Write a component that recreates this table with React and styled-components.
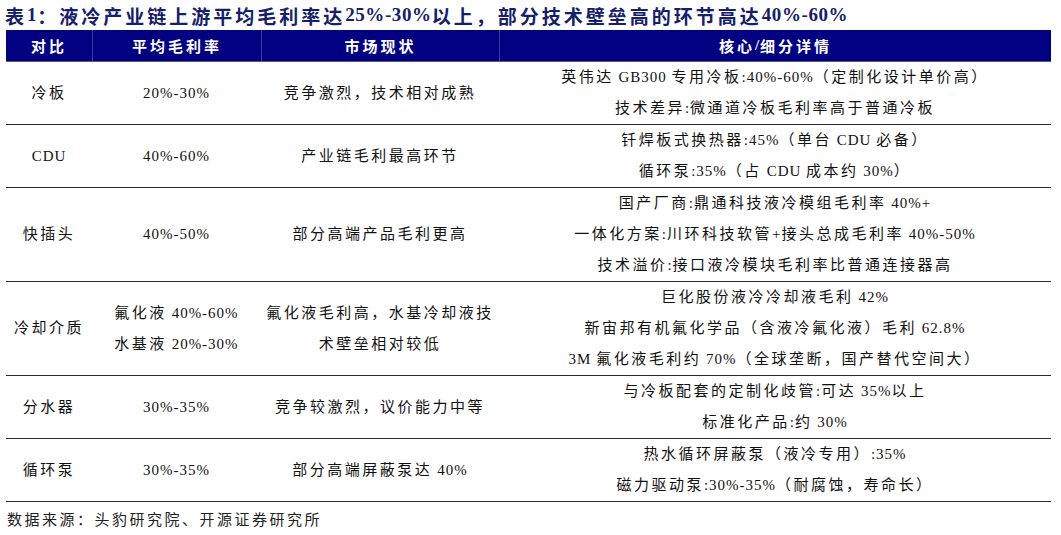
import React from "react";
import styled, { createGlobalStyle } from "styled-components";

const GlobalStyle = createGlobalStyle`
  body {
    margin: 0;
    background: #ffffff;
    font-family: "Liberation Serif", "Noto Sans CJK SC", serif;
  }
`;

const rows = [
  {
    name: ["冷板"],
    rate: ["20%-30%"],
    status: "竞争激烈，技术相对成熟",
    detail: ["英伟达 GB300 专用冷板:40%-60%（定制化设计单价高）", "技术差异:微通道冷板毛利率高于普通冷板"],
  },
  {
    name: ["CDU"],
    rate: ["40%-60%"],
    status: "产业链毛利最高环节",
    detail: ["钎焊板式换热器:45%（单台 CDU 必备）", "循环泵:35%（占 CDU 成本约 30%）"],
  },
  {
    name: ["快插头"],
    rate: ["40%-50%"],
    status: "部分高端产品毛利更高",
    detail: [
      "国产厂商:鼎通科技液冷模组毛利率 40%+",
      "一体化方案:川环科技软管+接头总成毛利率 40%-50%",
      "技术溢价:接口液冷模块毛利率比普通连接器高",
    ],
  },
  {
    name: ["冷却介质"],
    rate: ["氟化液 40%-60%", "水基液 20%-30%"],
    status: "氟化液毛利高，水基冷却液技术壁垒相对较低",
    detail: [
      "巨化股份液冷冷却液毛利 42%",
      "新宙邦有机氟化学品（含液冷氟化液）毛利 62.8%",
      "3M 氟化液毛利约 70%（全球垄断，国产替代空间大）",
    ],
  },
  {
    name: ["分水器"],
    rate: ["30%-35%"],
    status: "竞争较激烈，议价能力中等",
    detail: ["与冷板配套的定制化歧管:可达 35%以上", "标准化产品:约 30%"],
  },
  {
    name: ["循环泵"],
    rate: ["30%-35%"],
    status: "部分高端屏蔽泵达 40%",
    detail: ["热水循环屏蔽泵（液冷专用）:35%", "磁力驱动泵:30%-35%（耐腐蚀，寿命长）"],
  },
];

const Page = styled.div`
  width: 1061px;
  height: 535px;
  padding: 0 10px 0 6px;
  box-sizing: border-box;
  display: flex;
  flex-direction: column;
`;

const Title = styled.div`
  height: 30px;
  display: flex;
  align-items: center;
  font-size: 19px;
  font-weight: bold;
  color: #16206a;
  letter-spacing: 3px;
  white-space: nowrap;
  margin-left: -1px;
`;

const Latin = styled.span`
  letter-spacing: ${(p) => (p.$title ? "0.6px" : "1px")};
`;

const Table = styled.div`
  width: 1045px;
  display: flex;
  flex-direction: column;
`;

const Grid = styled.div`
  display: grid;
  grid-template-columns: 86px 169px 238px 552px;
`;

const HeadRow = styled(Grid)`
  height: 32px;
  background: #000080;
  border-bottom: 1px solid #5a5a7a;
  box-sizing: border-box;
`;

const HeadCell = styled.div`
  display: flex;
  align-items: center;
  justify-content: center;
  color: #ffffff;
  font-size: 15px;
  font-weight: bold;
  letter-spacing: 3px;
  border-left: ${(p) => (p.$first ? "none" : "1px solid #3c3c9c")};
`;

const BodyRow = styled(Grid)`
  border-bottom: 1.5px solid #2b2b2b;
`;

const Cell = styled.div`
  display: flex;
  flex-direction: column;
  align-items: center;
  justify-content: center;
  text-align: center;
  padding: 0 4px;
  font-size: 15px;
  line-height: 31px;
  letter-spacing: 2.5px;
  color: #111111;
`;

const Source = styled.div`
  flex: 1;
  display: flex;
  align-items: center;
  font-size: 15px;
  letter-spacing: 2.5px;
  color: #222222;
  padding-left: 1px;
`;

// ASCII runs get tighter spacing than the CJK glyphs
const Mixed = ({ text, title }) =>
  text.split(/([\x20-\x7E]*[\x21-\x7E][\x20-\x7E]*)/).map((part, i) =>
    /[\x21-\x7E]/.test(part) ? (
      <Latin key={i} $title={title}>
        {part}
      </Latin>
    ) : (
      part
    )
  );

const Lines = ({ lines }) =>
  lines.map((line, i) => (
    <div key={i}>
      <Mixed text={line} />
    </div>
  ));

const App = () => {
  return (
    <>
      <GlobalStyle />
      <Page>
        <Title>
          <Mixed text="表1：液冷产业链上游平均毛利率达 25%-30%以上，部分技术壁垒高的环节高达 40%-60%" title />
        </Title>
        <Table>
          <HeadRow>
            <HeadCell $first>对比</HeadCell>
            <HeadCell>平均毛利率</HeadCell>
            <HeadCell>市场现状</HeadCell>
            <HeadCell>
              核心<Latin>/</Latin>细分详情
            </HeadCell>
          </HeadRow>
          {rows.map((row, i) => (
            <BodyRow key={i}>
              <Cell>
                <Lines lines={row.name} />
              </Cell>
              <Cell>
                <Lines lines={row.rate} />
              </Cell>
              <Cell>
                <div>
                  <Mixed text={row.status} />
                </div>
              </Cell>
              <Cell>
                <Lines lines={row.detail} />
              </Cell>
            </BodyRow>
          ))}
        </Table>
        <Source>数据来源：头豹研究院、开源证券研究所</Source>
      </Page>
    </>
  );
};

export default App;
